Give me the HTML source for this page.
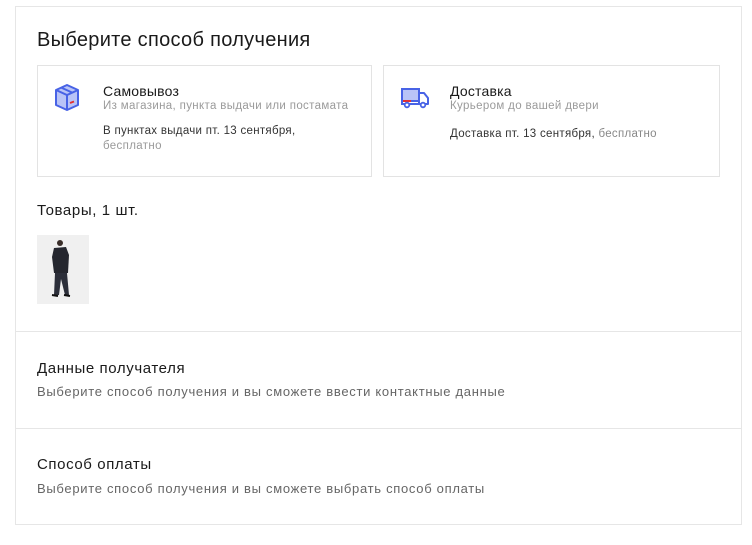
<!DOCTYPE html>
<html><head><meta charset="utf-8"><style>
*{box-sizing:border-box;margin:0;padding:0}
body{width:752px;height:545px;background:#fff;font-family:"Liberation Sans","Noto Sans CJK SC",sans-serif;color:#222;position:relative;overflow:hidden}
.wrap{position:absolute;left:15px;top:6px;width:727px;height:519px;border:1px solid #e6e6e6}
.abs{position:absolute;white-space:nowrap}
.h1{left:21px;top:22px;font-size:20px;color:#1a1a1a;letter-spacing:0.3px}
.card{top:58px;height:112px;border:1px solid #e3e3e3}
.t{font-size:14px;color:#1a1a1a;letter-spacing:0.2px}
.g{font-size:11.5px;color:#9a9a9a;letter-spacing:0.35px}
.d{font-size:11.5px;color:#333;letter-spacing:0.3px}
.sep{left:0;width:725px;height:1px;background:#e6e6e6}
.h2{font-size:15px;color:#1a1a1a;letter-spacing:0.6px}
.p{font-size:13px;color:#666;letter-spacing:0.7px}
</style></head><body>
<div class="wrap">
<div class="abs h1">Выберите способ получения</div>
<div class="abs card" style="left:21px;width:335px">
  <svg class="abs" style="left:15px;top:17px" width="28" height="28" viewBox="0 0 28 28">
    <path d="M3 7 L14 2 L25 7 L25 22 L14 27 L3 22 Z" fill="#b9c4f7" stroke="#4863e6" stroke-width="2" stroke-linejoin="round"/>
    <path d="M3 7 L14 12 L25 7 M14 12 L14 27 M8 4.5 L19 9.5" fill="none" stroke="#4863e6" stroke-width="2"/>
    <path d="M17 20 L21 18.5" stroke="#e53030" stroke-width="2"/>
  </svg>
  <div class="abs t" style="left:65px;top:17px">Самовывоз</div>
  <div class="abs g" style="left:65px;top:34px">Из магазина, пункта выдачи или постамата</div>
  <div class="abs d" style="left:65px;top:59px">В пунктах выдачи пт. 13 сентября,</div>
  <div class="abs g" style="left:65px;top:74px">бесплатно</div>
</div>
<div class="abs card" style="left:367px;width:337px">
  <svg class="abs" style="left:17px;top:21px" width="28" height="22" viewBox="0 0 28 22">
    <rect x="1" y="2" width="17" height="12" fill="#b9c4f7" stroke="#4863e6" stroke-width="2"/>
    <path d="M18 6 L23 6 L27 11 L27 17 L18 17 Z" fill="#fff" stroke="#4863e6" stroke-width="2" stroke-linejoin="round"/>
    <path d="M1 14 L1 17 L18 17" fill="none" stroke="#4863e6" stroke-width="2"/>
    <path d="M2 14 L10 14" stroke="#e53030" stroke-width="2"/>
    <circle cx="6" cy="18" r="2.3" fill="#fff" stroke="#4863e6" stroke-width="1.8"/>
    <circle cx="22" cy="18" r="2.3" fill="#fff" stroke="#4863e6" stroke-width="1.8"/>
  </svg>
  <div class="abs t" style="left:66px;top:17px">Доставка</div>
  <div class="abs g" style="left:66px;top:34px">Курьером до вашей двери</div>
  <div class="abs d" style="left:66px;top:62px">Доставка пт. 13 сентября, <span style="color:#888">бесплатно</span></div>
</div>
<div class="abs h2" style="left:21px;top:195px">Товары, 1 шт.</div>
<div class="abs" style="left:21px;top:228px;width:52px;height:69px;background:#f0f0f0">
  <svg width="52" height="69" viewBox="0 0 52 69">
    <circle cx="23" cy="8" r="3" fill="#3a2e2a"/>
    <path d="M17 13 L29 12 L32 20 L31 38 L17 38 L15 22 Z" fill="#25272f"/>
    <path d="M18 38 L30 38 L32 60 L28 60 L24 44 L22 60 L17 60 Z" fill="#2c2f3a"/>
    <path d="M15 60 L21 61 M27 60 L33 61" stroke="#111" stroke-width="2"/>
  </svg>
</div>
<div class="abs sep" style="top:324px"></div>
<div class="abs h2" style="left:21px;top:353px">Данные получателя</div>
<div class="abs p" style="left:21px;top:377px">Выберите способ получения и вы сможете ввести контактные данные</div>
<div class="abs sep" style="top:421px"></div>
<div class="abs h2" style="left:21px;top:449px">Способ оплаты</div>
<div class="abs p" style="left:21px;top:474px">Выберите способ получения и вы сможете выбрать способ оплаты</div>
</div>
</body></html>
